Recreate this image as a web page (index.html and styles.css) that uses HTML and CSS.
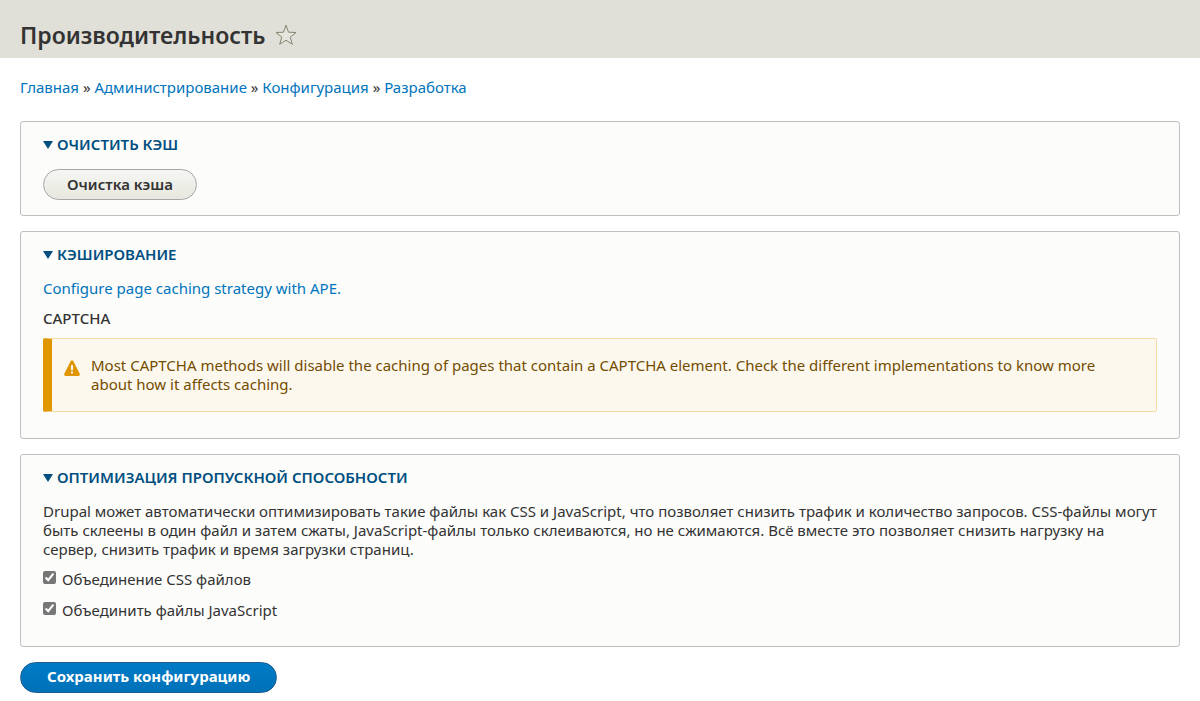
FILE: index.html
```html
<!DOCTYPE html>
<html lang="ru">
<head>
<meta charset="utf-8">
<meta name="viewport" content="width=device-width, initial-scale=1">
<title>Производительность</title>
<link rel="stylesheet" href="styles.css">
</head>
<body>
<header class="page-header">
  <h1 class="page-title">Производительность</h1>
  <button class="shortcut" type="button" aria-label="Добавить в избранное">
    <svg width="22" height="22" viewBox="0 0 22 22" aria-hidden="true"><path d="M11 1.200 13.500 8.200 21 8.500 15.200 13.100 17.300 20.300 11 16.200 4.700 20.300 6.800 13.100 1 8.500 8.500 8.200Z" fill="#e6e6df" stroke="#84846f" stroke-width="1" stroke-linejoin="round"/></svg>
  </button>
</header>
<main class="content">
  <nav class="breadcrumb" aria-label="Строка навигации">
    <a href="#">Главная</a> » <a href="#">Администрирование</a> » <a href="#">Конфигурация</a> » <a href="#">Разработка</a>
  </nav>
  <form class="settings">
    <details class="panel" open>
      <summary class="panel-title">Очистить кэш</summary>
      <button class="button" type="button">Очистка кэша</button>
    </details>
    <details class="panel panel-tall" open>
      <summary class="panel-title">Кэширование</summary>
      <p class="text"><a href="#">Configure page caching strategy with APE.</a></p>
      <h2 class="label">CAPTCHA</h2>
      <div class="warning" role="status">
        <svg class="warning-icon" width="16" height="16" viewBox="0 0 16 16" aria-hidden="true"><path d="M8 .2C7.4.2 7 .5 6.700 1L.3 13.700C-.2 14.900.4 15.900 1.500 15.900H14.500C15.600 15.900 16.200 14.900 15.700 13.700L9.300 1C9 .5 8.600.2 8 .2Z" fill="#e09600"/><path d="M7 5H9V10.200H7ZM7 11.600H9V13.600H7Z" fill="#fdf8ed"/></svg>
        <p class="text">Most CAPTCHA methods will disable the caching of pages that contain a CAPTCHA element. Check the different implementations to know more about how it affects caching.</p>
      </div>
    </details>
    <details class="panel panel-tall" open>
      <summary class="panel-title">Оптимизация пропускной способности</summary>
      <p class="text">Drupal может автоматически оптимизировать такие файлы как CSS и JavaScript, что позволяет снизить трафик и количество запросов. CSS-файлы могут быть склеены в один файл и затем сжаты, JavaScript-файлы только склеиваются, но не сжимаются. Всё вместе это позволяет снизить нагрузку на сервер, снизить трафик и время загрузки страниц.</p>
      <div class="options">
        <div class="option"><input class="check" type="checkbox" id="css" checked><label for="css">Объединение CSS файлов</label></div>
        <div class="option"><input class="check" type="checkbox" id="js" checked><label for="js">Объединить файлы JavaScript</label></div>
      </div>
    </details>
    <button class="button button-primary" type="submit">Сохранить конфигурацию</button>
  </form>
</main>
</body>
</html>
```

FILE: styles.css
```css
* {
  box-sizing: border-box;
}

body {
  margin: 0;
  background: #fff;
  color: #333;
  font-family: "Noto Sans", "Open Sans", sans-serif;
  font-size: 15px;
  line-height: 19px;
}

a {
  color: #0074bd;
  text-decoration: none;
}

a:hover {
  text-decoration: underline;
}

.page-header {
  display: flex;
  align-items: center;
  gap: 10px;
  padding: 19px 20px 7px;
  background: #e0e0d8;
}

.page-title {
  margin: 0;
  font-size: 23px;
  font-weight: 600;
  line-height: 32px;
}

.shortcut {
  display: flex;
  padding: 0;
  border: 0;
  background: none;
  cursor: pointer;
}

.content {
  padding: 20px 20px 8px;
}

.breadcrumb {
  margin-bottom: 24px;
}

.settings {
  display: flex;
  flex-direction: column;
  align-items: stretch;
  gap: 15px;
}

.panel {
  padding: 13px 22px 15px;
  border: 1px solid #bfbfbf;
  border-radius: 3px;
  background: #fcfcfa;
}

.panel-tall {
  padding-bottom: 26px;
}

.panel-title {
  display: flex;
  align-items: center;
  gap: 4px;
  margin-bottom: 15px;
  color: #004f80;
  font-size: 15px;
  font-weight: 600;
  text-transform: uppercase;
  cursor: pointer;
}

.panel-title::before {
  content: "";
  border: 5px solid transparent;
  border-top: 8px solid #004f80;
  border-bottom: 0;
}

.text {
  margin: 0;
}

.label {
  margin: 11px 0 10px;
  font-size: 15px;
  font-weight: 500;
  line-height: 19px;
}

.warning {
  display: flex;
  gap: 11px;
  padding: 17px 20px 17px 12px;
  border: 1px solid #f4daa6;
  border-left: 9px solid #e09600;
  border-radius: 2px;
  background: #fdf8ed;
  color: #734c00;
}

.warning-icon {
  flex: none;
  margin-top: 4px;
}

.options {
  display: flex;
  flex-direction: column;
  gap: 12px;
  margin-top: 11px;
}

.option {
  display: flex;
  align-items: center;
  gap: 6px;
}

.check {
  width: 13px;
  height: 13px;
  margin: 0 0 4px;
  accent-color: #767676;
}

.button {
  padding: 5px 23px;
  border: 1px solid #a6a6a6;
  border-radius: 16px;
  background: linear-gradient(#f6f6f3, #e7e7df);
  color: #333;
  font: 600 15px/19px "Noto Sans", "Open Sans", sans-serif;
  cursor: pointer;
}

.button-primary {
  align-self: flex-start;
  padding: 4px 26px 6px;
  border-color: #1e5c90;
  background: linear-gradient(#007bc6, #0071b8);
  color: #fff;
  font-weight: 700;
}
```
